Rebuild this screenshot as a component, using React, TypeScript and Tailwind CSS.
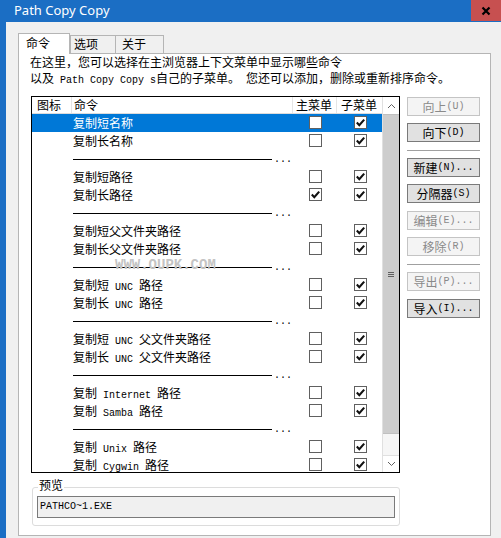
import React from "react";

type Seg = string | { m: string };
type Row = { sep: true } | { t: Seg[]; m: boolean; s: boolean; sel?: boolean };

const rows: Row[] = [
  { t: ["复制短名称"], m: false, s: true, sel: true },
  { t: ["复制长名称"], m: false, s: true },
  { sep: true },
  { t: ["复制短路径"], m: false, s: true },
  { t: ["复制长路径"], m: true, s: true },
  { sep: true },
  { t: ["复制短父文件夹路径"], m: false, s: true },
  { t: ["复制长父文件夹路径"], m: false, s: true },
  { sep: true },
  { t: ["复制短", { m: " UNC " }, "路径"], m: false, s: true },
  { t: ["复制长", { m: " UNC " }, "路径"], m: false, s: true },
  { sep: true },
  { t: ["复制短", { m: " UNC " }, "父文件夹路径"], m: false, s: true },
  { t: ["复制长", { m: " UNC " }, "父文件夹路径"], m: false, s: true },
  { sep: true },
  { t: ["复制", { m: " Internet " }, "路径"], m: false, s: true },
  { t: ["复制", { m: " Samba " }, "路径"], m: false, s: true },
  { sep: true },
  { t: ["复制", { m: " Unix " }, "路径"], m: false, s: true },
  { t: ["复制", { m: " Cygwin " }, "路径"], m: false, s: true },
];

function Mono({ children }: { children: React.ReactNode }) {
  return (
    <span className="font-['Liberation_Mono',monospace] text-[10px] leading-[10px] whitespace-pre">
      {children}
    </span>
  );
}

function Text({ segs }: { segs: Seg[] }) {
  return (
    <>
      {segs.map((s, i) =>
        typeof s === "string" ? <span key={i}>{s}</span> : <Mono key={i}>{s.m}</Mono>
      )}
    </>
  );
}

function Check({ on }: { on: boolean }) {
  return (
    <div className="w-[13px] h-[13px] bg-white border border-[#606060] flex items-center justify-center">
      {on && (
        <svg width="11" height="11" viewBox="0 0 11 11">
          <path d="M1.8 5.6 L4.3 8.2 L9.2 2.6" fill="none" stroke="#111" strokeWidth="2.1" />
        </svg>
      )}
    </div>
  );
}

function Btn({ label, enabled, mt }: { label: React.ReactNode; enabled: boolean; mt: string }) {
  return (
    <div
      className={
        mt +
        " h-[19px] w-[73px] border flex items-center justify-center leading-[17px] " +
        (enabled
          ? "bg-[#e1e1e1] border-[#7a7a7a] text-black"
          : "bg-[#f4f4f4] border-[#c4c4c4] text-[#8a8a8a]")
      }
    >
      {label}
    </div>
  );
}

export default function App() {
  return (
    <div className="relative w-[501px] h-[538px] overflow-hidden bg-[#f0f0f0] flex flex-col font-['Noto_Sans_CJK_SC','Noto_Sans',sans-serif] text-[12px] text-black">
      {/* title bar */}
      <div className="h-[22px] shrink-0 bg-[#1b6ec4] flex justify-between">
        <div className="pl-[14px] pt-[1px] text-white text-[13px] leading-[18px] font-['Noto_Sans',sans-serif]">
          Path Copy Copy
        </div>
        <div className="w-[30px] h-[21px] bg-[#c75050] flex items-center justify-center">
          <svg width="10" height="10" viewBox="0 0 10 10">
            <path d="M1.5 1.5 L8.5 8.5 M8.5 1.5 L1.5 8.5" stroke="#000" strokeWidth="2.2" />
          </svg>
        </div>
      </div>

      <div className="flex-1 flex">
        <div className="w-[6px] bg-[#1b6ec4]" />
        <div className="pl-[12px] pt-[11px] flex flex-col">
          {/* tabs */}
          <div className="flex items-end h-[20px]">
            <div className="relative z-10 h-[21px] -mb-px w-[52px] bg-white border border-b-0 border-[#b5b5b5] pl-[7px] leading-[18px]">
              命令
            </div>
            <div className="h-[18px] w-[46px] bg-[#f0f0f0] border border-b-0 border-[#b5b5b5] pl-[3px] leading-[16px]">
              选项
            </div>
            <div className="h-[18px] w-[48px] bg-[#f0f0f0] border-t border-r border-[#b5b5b5] pl-[6px] leading-[16px]">
              关于
            </div>
          </div>

          {/* panel */}
          <div className="w-[473px] h-[483px] bg-white border border-[#b5b5b5] flex flex-col">
            <div className="ml-[11px] h-[32px] shrink-0 flex flex-col">
              <div className="h-[16px] leading-[16px] whitespace-pre">在这里，您可以选择在主浏览器上下文菜单中显示哪些命令</div>
              <div className="h-[16px] leading-[16px] whitespace-pre">
                以及<Mono> Path Copy Copy s</Mono>自己的子菜单。<Mono> </Mono>您还可以添加，删除或重新排序命令。
              </div>
            </div>

            <div className="mt-[10px] flex items-start">
              {/* list */}
              <div className="ml-[12px] w-[369px] h-[377px] border border-black flex">
                <div className="w-[350px] flex flex-col overflow-hidden">
                  <div className="h-[17px] shrink-0 border-b border-[#dcdcdc] flex leading-[16px]">
                    <div className="w-[40px] pl-[5px] border-r border-[#e5e5e5]">图标</div>
                    <div className="w-[221px] pl-[2px] border-r border-[#e5e5e5]">命令</div>
                    <div className="w-[44px] pl-[3px] border-r border-[#e5e5e5]">主菜单</div>
                    <div className="w-[45px] pl-[4px]">子菜单</div>
                  </div>
                  <div className="flex flex-col">
                    {rows.map((r, i) =>
                      "sep" in r ? (
                        <div key={i} className="h-[18px] shrink-0 flex">
                          <div className="w-[40px]" />
                          <div className="w-[221px] flex items-start">
                            <div className="mt-[9px] ml-[1px] w-[199px] h-px bg-black" />
                            <div className="mt-[5px] ml-[2px] font-['Liberation_Mono',monospace] text-[10px] leading-[10px]">
                              ...
                            </div>
                          </div>
                        </div>
                      ) : (
                        <div
                          key={i}
                          className={
                            "h-[18px] shrink-0 flex leading-[18px] " +
                            (r.sel ? "bg-[#0078d7] text-white" : "")
                          }
                        >
                          <div className="w-[40px]" />
                          <div className="w-[221px] h-[18px] pl-[1px] whitespace-pre overflow-hidden">
                            <Text segs={r.t} />
                          </div>
                          <div className="w-[44px] flex justify-center pt-[2px] pl-[1px]">
                            <Check on={r.m} />
                          </div>
                          <div className="w-[45px] flex justify-center pt-[2px] pl-[1px]">
                            <Check on={r.s} />
                          </div>
                        </div>
                      )
                    )}
                  </div>
                </div>
                {/* scrollbar */}
                <div className="w-[17px] flex flex-col bg-[#f0f0f0] border-l border-[#e0e0e0]">
                  <div className="h-[17px] shrink-0 bg-white flex items-center justify-center">
                    <svg width="9" height="6" viewBox="0 0 9 6">
                      <path d="M1 5 L4.5 1.5 L8 5" fill="none" stroke="#606060" strokeWidth="1" />
                    </svg>
                  </div>
                  <div className="h-[320px] shrink-0 bg-[#cdcdcd] border-y border-[#c0c0c0] flex items-center justify-center">
                    <div className="flex flex-col gap-[1px]">
                      <div className="w-[6px] h-px bg-[#606060]" />
                      <div className="w-[6px] h-px bg-[#606060]" />
                      <div className="w-[6px] h-px bg-[#606060]" />
                    </div>
                  </div>
                  <div className="flex-1 bg-[#f6f6f6]" />
                  <div className="h-[17px] shrink-0 bg-white border-t border-[#e0e0e0] flex items-center justify-center">
                    <svg width="9" height="6" viewBox="0 0 9 6">
                      <path d="M1 1 L4.5 4.5 L8 1" fill="none" stroke="#606060" strokeWidth="1" />
                    </svg>
                  </div>
                </div>
              </div>

              {/* buttons */}
              <div className="ml-[7px] w-[73px] flex flex-col">
                <Btn mt="mt-[1px]" enabled={false} label={<>向上<Mono>(U)</Mono></>} />
                <Btn mt="mt-[7px]" enabled label={<>向下<Mono>(D)</Mono></>} />
                <div className="mt-[8px] h-px bg-[#a0a0a0]" />
                <Btn mt="mt-[7px]" enabled label={<>新建<Mono>(N)...</Mono></>} />
                <Btn mt="mt-[7px]" enabled label={<>分隔器<Mono>(S)</Mono></>} />
                <Btn mt="mt-[8px]" enabled={false} label={<>编辑<Mono>(E)...</Mono></>} />
                <Btn mt="mt-[7px]" enabled={false} label={<>移除<Mono>(R)</Mono></>} />
                <div className="mt-[8px] h-px bg-[#a0a0a0]" />
                <Btn mt="mt-[7px]" enabled={false} label={<>导出<Mono>(P)...</Mono></>} />
                <Btn mt="mt-[8px]" enabled label={<>导入<Mono>(I)...</Mono></>} />
              </div>
            </div>

            {/* preview group */}
            <div className="relative mt-[14px] ml-[13px] w-[368px] h-[39px] border border-[#dcdcdc] rounded-[3px]">
              <div className="absolute left-[5px] -top-[11px] bg-white px-[1px] leading-[16px]">预览</div>
              <div className="mt-[8px] ml-[4px] w-[358px] h-[22px] bg-[#f0f0f0] border border-[#7a7a7a] pl-[2px] leading-[20px] font-['Liberation_Mono',monospace] text-[10px]">
                PATHCO~1.EXE
              </div>
            </div>
          </div>
        </div>
      </div>

      {/* watermark overlay */}
      <div className="absolute left-[115px] top-[257px] font-['Liberation_Mono',monospace] font-bold text-[14px] leading-[16px] text-[#c4c4c4]">
        WWW.OUPK.COM
      </div>
    </div>
  );
}
